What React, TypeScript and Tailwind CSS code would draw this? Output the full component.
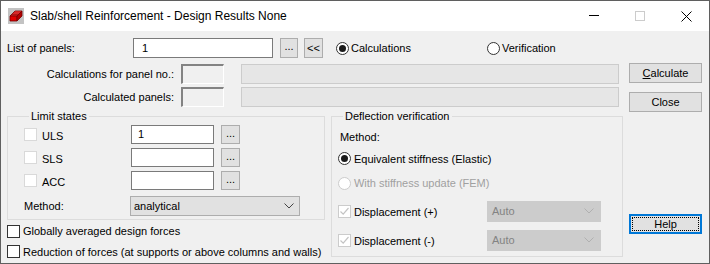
import React from "react";

const font = "font-['Liberation_Sans',Arial,sans-serif] text-[11px]";

function Btn({ label, className = "" }: { label: React.ReactNode; className?: string }) {
  return (
    <div
      className={`flex items-center justify-center border border-[#adadad] bg-[#e1e1e1] text-black ${className}`}
    >
      {label}
    </div>
  );
}

function Check({ disabled = false, checked = false }: { disabled?: boolean; checked?: boolean }) {
  return (
    <div
      className={`flex h-[13px] w-[13px] shrink-0 items-center justify-center border bg-white ${
        disabled ? "border-[#cccccc]" : "border-[#333333]"
      }`}
    >
      {checked && (
        <svg width="11" height="11" viewBox="0 0 11 11">
          <path d="M1.5 5.5 L4.2 8.2 L9.5 2" fill="none" stroke={disabled ? "#c4c4c4" : "#000"} strokeWidth="1.2" />
        </svg>
      )}
    </div>
  );
}

function LightCheck() {
  return <div className="h-[13px] w-[13px] shrink-0 border border-[#d9d9d9] bg-white" />;
}

function Radio({ on = false, disabled = false }: { on?: boolean; disabled?: boolean }) {
  return (
    <div
      className={`flex h-[13px] w-[13px] shrink-0 items-center justify-center rounded-full border bg-white ${
        disabled ? "border-[#cccccc]" : "border-[#333333]"
      }`}
    >
      {on && <div className="h-[7px] w-[7px] rounded-full bg-[#1a1a1a]" />}
    </div>
  );
}

function Chevron({ color }: { color: string }) {
  return (
    <svg width="10" height="6" viewBox="0 0 10 6">
      <path d="M0.5 0.5 L5 5 L9.5 0.5" fill="none" stroke={color} strokeWidth="1" />
    </svg>
  );
}

function Sunken({ className = "" }: { className?: string }) {
  return (
    <div
      className={`h-[20px] border-t-2 border-l-2 border-r border-b border-t-[#838383] border-l-[#838383] border-r-white border-b-white bg-[#f0f0f0] ${className}`}
    />
  );
}

function AppIcon() {
  return (
    <svg width="16" height="16" viewBox="0 0 16 16">
      <rect x="0" y="0" width="16" height="16" fill="#c3c3c3" />
      <path d="M2 8 L7 3 L14 3 L9 8 Z" fill="#ff3a3a" stroke="#7a0000" strokeWidth="0.8" />
      <path d="M2 8 L9 8 L9 13 L2 13 Z" fill="#e00000" stroke="#7a0000" strokeWidth="0.8" />
      <path d="M9 8 L14 3 L14 8 L9 13 Z" fill="#b00000" stroke="#7a0000" strokeWidth="0.8" />
      <path d="M3.5 6.5 L10.5 6.5 M5 5 L12 5" stroke="#7a0000" strokeWidth="0.6" />
    </svg>
  );
}

export default function App() {
  return (
    <div className={`h-[264px] w-[710px] border border-[#5f5f5f] bg-[#f0f0f0] ${font} text-black`}>
      {/* title bar */}
      <div className="flex h-[30px] items-center bg-white pl-[7px]">
        <AppIcon />
        <span className="ml-[6px] text-[12px]">Slab/shell Reinforcement - Design Results None</span>
        <div className="ml-auto flex h-full items-center">
          <div className="flex w-[46px] justify-center pb-[1px]">
            <div className="h-px w-[10px] bg-black" />
          </div>
          <div className="flex w-[46px] justify-center">
            <div className="h-[10px] w-[10px] border border-[#cccccc]" />
          </div>
          <div className="flex w-[46px] justify-center">
            <svg width="11" height="11" viewBox="0 0 11 11">
              <path d="M0.5 0.5 L10.5 10.5 M10.5 0.5 L0.5 10.5" stroke="#000" strokeWidth="1" />
            </svg>
          </div>
        </div>
      </div>

      <div className="flex">
        {/* main column */}
        <div className="w-[622px] pl-[6px]">
          {/* row 1 */}
          <div className="mt-[7px] flex h-[20px] items-center">
            <span className="w-[126px]">List of panels:</span>
            <div className="flex h-[20px] w-[140px] items-center border border-[#7a7a7a] bg-white pl-[8px]">1</div>
            <Btn label="..." className="ml-[7px] h-[20px] w-[18px] pb-[3px]" />
            <Btn label="<<" className="ml-[6px] h-[20px] w-[19px]" />
            <div className="ml-[13px] flex items-center gap-[2px]">
              <Radio on />
              <span>Calculations</span>
            </div>
            <div className="ml-[76px] flex items-center gap-[2px]">
              <Radio />
              <span>Verification</span>
            </div>
          </div>

          {/* row 2 */}
          <div className="mt-[6px] flex h-[20px] items-center">
            <span className="w-[174px] pr-[7px] text-right">Calculations for panel no.:</span>
            <Sunken className="w-[43px]" />
            <div className="ml-[17px] h-[20px] w-[378px] border border-[#cccccc] bg-[#e6e6e6]" />
          </div>

          {/* row 3 */}
          <div className="mt-[3px] flex h-[20px] items-center">
            <span className="w-[174px] pr-[7px] text-right">Calculated panels:</span>
            <Sunken className="w-[43px]" />
            <div className="ml-[17px] h-[20px] w-[378px] border border-[#cccccc] bg-[#e6e6e6]" />
          </div>

          {/* groups */}
          <div className="mt-[2px] flex">
            <div className="w-[319px]">
              <fieldset className="h-[111px] border border-[#dcdcdc] px-[16px]">
                <legend className="ml-[5px] px-[2px] leading-[14px]">Limit states</legend>
                {["ULS", "SLS", "ACC"].map((s, i) => (
                  <div key={s} className={`flex h-[19px] items-center ${i === 0 ? "mt-[2px]" : "mt-[4px]"}`}>
                    <LightCheck />
                    <span className="ml-[5px] w-[89px] pt-[3px]">{s}</span>
                    <div className="flex h-[19px] w-[83px] items-center border border-[#7a7a7a] bg-white pl-[6px]">
                      {i === 0 ? "1" : ""}
                    </div>
                    <Btn label="..." className="ml-[7px] h-[19px] w-[19px] pb-[3px]" />
                  </div>
                ))}
                <div className="mt-[6px] flex h-[20px] items-center">
                  <span className="w-[106px]">Method:</span>
                  <div className="flex h-[20px] w-[170px] items-center justify-between border border-[#adadad] bg-[#e1e1e1] pl-[3px] pr-[5px]">
                    <span>analytical</span>
                    <Chevron color="#444" />
                  </div>
                </div>
              </fieldset>
              <div className="mt-[3px] flex items-center gap-[3px]">
                <Check />
                <span>Globally averaged design forces</span>
              </div>
              <div className="mt-[4px] flex items-center gap-[3px]">
                <Check />
                <span>Reduction of forces (at supports or above columns and walls)</span>
              </div>
            </div>

            <fieldset className="ml-[6px] h-[148px] w-[293px] border border-[#dcdcdc] pl-[6px]">
              <legend className="ml-[5px] px-[2px] leading-[14px]">Deflection verification</legend>
              <div className="mt-[6px] pl-[2px]">Method:</div>
              <div className="mt-[5px] flex items-center gap-[3px]">
                <Radio on />
                <span>Equivalent stiffness (Elastic)</span>
              </div>
              <div className="mt-[8px] flex items-center gap-[3px] text-[#a0a0a0]">
                <Radio disabled />
                <span>With stiffness update (FEM)</span>
              </div>
              {["Displacement (+)", "Displacement (-)"].map((d, i) => (
                <div key={d} className={`flex h-[21px] items-center ${i === 0 ? "mt-[9px]" : "mt-[8px]"}`}>
                  <Check disabled checked />
                  <span className="ml-[3px] w-[133px] pt-[2px]">{d}</span>
                  <div className="flex h-[21px] w-[114px] items-center justify-between border border-[#cccccc] bg-[#cccccc] pl-[4px] pr-[6px] text-[#838383]">
                    <span>Auto</span>
                    <Chevron color="#b0b0b0" />
                  </div>
                </div>
              ))}
            </fieldset>
          </div>
        </div>

        {/* button column */}
        <div className="ml-[6px] flex w-[73px] flex-col">
          <Btn
            label={
              <span>
                <span className="underline">C</span>alculate
              </span>
            }
            className="mt-[32px] h-[20px] w-[73px]"
          />
          <Btn label="Close" className="mt-[9px] h-[20px] w-[73px]" />
          <div className="mt-[102px] h-[20px] w-[73px] border-2 border-[#0078d7] bg-[#e1e1e1] p-px">
            <div className="flex h-full w-full items-center justify-center border border-dotted border-black">
              Help
            </div>
          </div>
        </div>
      </div>
    </div>
  );
}
